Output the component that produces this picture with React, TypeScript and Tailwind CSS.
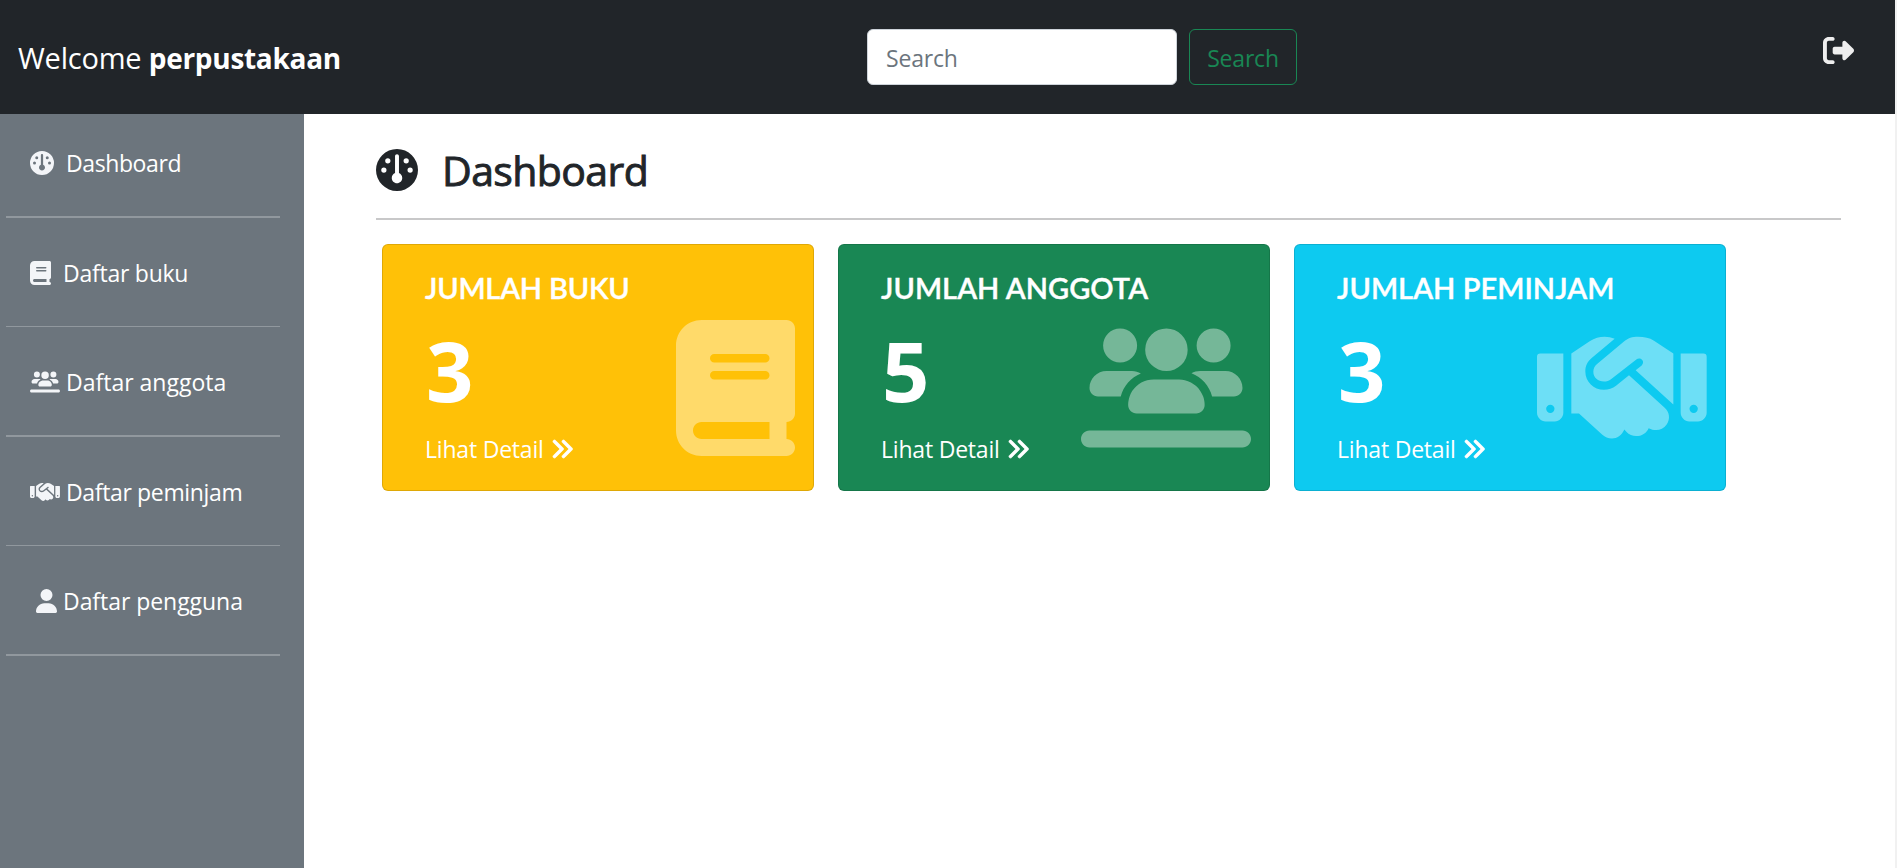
import type { ComponentType } from "react";
import {
  FaAnglesRight,
  FaBook,
  FaGauge,
  FaRightFromBracket,
  FaUser,
  FaUsersLine,
} from "react-icons/fa6";

type IconProps = { className?: string };

function Handshake({ className }: IconProps) {
  return (
    <svg viewBox="757 256.5 510 408" fill="currentColor" fillRule="evenodd" className={className}>
      <path d="M757 367q0-10 10-10h69v178c0 14-12 26-26 26h-27c-14 0-26-12-26-26zM797 510.500a12.500 12.500 0 1 0 0 25a12.500 12.500 0 1 0 0-25z" />
      <path d="M1188 357h68q10 0 10 10v168c0 14-12 26-26 26h-26c-14 0-26-12-26-26zM1227 510.500a12.500 12.500 0 1 0 0 25a12.500 12.500 0 1 0 0-25z" />
      <path d="M1166 357L1108 319C1094 310 1080 307 1060 307C1043 307 1030 311 1017 322L939 387C930 394 926 402 926 412C926 430 940 441 958 441C966 441 973 439 979 434L1055 375C1060 371 1068 371 1072 376C1077 381 1076 388 1071 393L1053 407L1166 510Z" />
      <path d="M860 357L915 320C930 311 944 307 960 307C970 307 981 309 990 313L922 370C908 381 902 395 902 411C902 442 927 466 958 466C971 466 984 462 994 454L1033 422L1140 520C1155 533 1157 555 1146 570C1133 588 1112 591 1092 581C1082 606 1045 614 1025 592L1019 585C1011 603 997 612 982 612C970 612 961 608 953 601L883 537H860Z" />
    </svg>
  );
}

type NavItem = {
  label: string;
  Icon: ComponentType<IconProps>;
  row: string;
  icon: string;
  text: string;
};

const navItems: NavItem[] = [
  { label: "Dashboard", Icon: FaGauge, row: "h-[104px] border-b-2", icon: "w-6", text: "ml-3 tracking-[-0.4px]" },
  { label: "Daftar buku", Icon: FaBook, row: "h-[109px] border-b", icon: "w-[21px]", text: "ml-3 tracking-[-0.25px]" },
  { label: "Daftar anggota", Icon: FaUsersLine, row: "h-[110px] border-b-2", icon: "w-[30px]", text: "ml-1.5" },
  { label: "Daftar peminjam", Icon: Handshake, row: "h-[109px] border-b", icon: "w-[30px]", text: "ml-1.5 tracking-[-0.35px]" },
  { label: "Daftar pengguna", Icon: FaUser, row: "h-[110px] border-b-2", icon: "ml-1.5 w-[21px]", text: "ml-1.5 tracking-[-0.05px]" },
];

type Stat = {
  title: string;
  value: number;
  Icon: ComponentType<IconProps>;
  card: string;
  icon: string;
  text: string;
};

const stats: Stat[] = [
  { title: "JUMLAH BUKU", value: 3, Icon: FaBook, card: "bg-[#ffc107]", icon: "w-[119px]", text: "tracking-[-0.2px]" },
  { title: "JUMLAH ANGGOTA", value: 5, Icon: FaUsersLine, card: "bg-[#198754]", icon: "w-[170px]", text: "tracking-[0.05px]" },
  { title: "JUMLAH PEMINJAM", value: 3, Icon: Handshake, card: "bg-[#0dcaf0]", icon: "w-[170px]", text: "tracking-[0.05px]" },
];

function Header() {
  return (
    <header className="flex h-[114px] items-center bg-[#212529] text-white">
      <p className="w-[867px] pt-1.5 pl-[18px] leading-9 whitespace-nowrap">
        <span className="text-[29px] tracking-[-0.2px]">Welcome </span>
        <b className="text-[28px] font-bold tracking-[-0.3px]">perpustakaan</b>
      </p>
      <form className="flex gap-3 text-[23px] tracking-[-0.2px]">
        <input
          type="search"
          placeholder="Search"
          className="h-14 w-[310px] rounded-md border border-[#ced4da] bg-white pt-0.5 pl-[18px] placeholder:text-[#6c757d]"
        />
        <button type="button" className="h-14 w-[108px] rounded-md border border-[#198754] pt-0.5 text-[#198754]">
          Search
        </button>
      </form>
      <a href="#" className="mr-[41.5px] mb-[13px] ml-auto text-[#eeeeee]">
        <FaRightFromBracket className="size-[31px]" />
      </a>
    </header>
  );
}

function Sidebar() {
  return (
    <nav className="w-[304px] bg-[#6c757d] pr-6 pl-1.5 text-[23px] text-white">
      {navItems.map(({ label, Icon, row, icon, text }) => (
        <a key={label} href="#" className={`flex items-end border-[#91989e] pb-[35px] pl-6 ${row}`}>
          <span className="flex h-9 items-center leading-9 whitespace-nowrap">
            <Icon className={`h-6 shrink-0 text-[#f3f5f8] ${icon}`} />
            <span className={text}>{label}</span>
          </span>
        </a>
      ))}
    </nav>
  );
}

function StatCard({ title, value, Icon, card, icon, text }: Stat) {
  return (
    <article className={`flex h-[247px] w-[432px] justify-between rounded-md border border-black/[.125] pr-[18px] pl-[42px] text-white ${card}`}>
      <div className="w-0 pt-[25px] whitespace-nowrap">
        <h2 className={`font-['Lato','Open_Sans',sans-serif] text-[29px] leading-9 font-semibold [-webkit-text-stroke:0.4px_currentColor] ${text}`}>{title}</h2>
        <p className="mt-[22px] ml-px text-[83px] leading-[84px] font-bold">{value}</p>
        <a href="#" className="mt-[19px] flex items-center text-[23px] leading-9">
          <span className="tracking-[-0.2px]">Lihat Detail</span>
          <FaAnglesRight className="ml-[6.5px] size-6 shrink-0 stroke-current stroke-[16]" />
        </a>
      </div>
      <Icon className={`mt-[75px] h-[136px] shrink-0 text-white/40 ${icon}`} />
    </article>
  );
}

export default function App() {
  return (
    <div className="h-[868px] overflow-hidden border-r-2 border-[#f1f1f1] bg-white font-['Open_Sans','Noto_Sans',sans-serif]">
      <Header />
      <div className="flex h-[754px]">
        <Sidebar />
        <main className="flex-1 pt-[31px] pr-[54px] pl-[72px] text-[#212529]">
          <h1 className="flex h-[50px] items-center text-[41px] leading-[50px] font-normal tracking-[-0.6px]">
            <FaGauge className="size-[42px]" />
            <span className="-mt-px ml-6 [-webkit-text-stroke:0.9px_currentColor]">Dashboard</span>
          </h1>
          <hr className="mt-[23px] border-t-2 border-[#c8c8c9]" />
          <section className="mt-6 flex gap-6 pl-1.5">
            {stats.map((stat) => (
              <StatCard key={stat.title} {...stat} />
            ))}
          </section>
        </main>
      </div>
    </div>
  );
}
